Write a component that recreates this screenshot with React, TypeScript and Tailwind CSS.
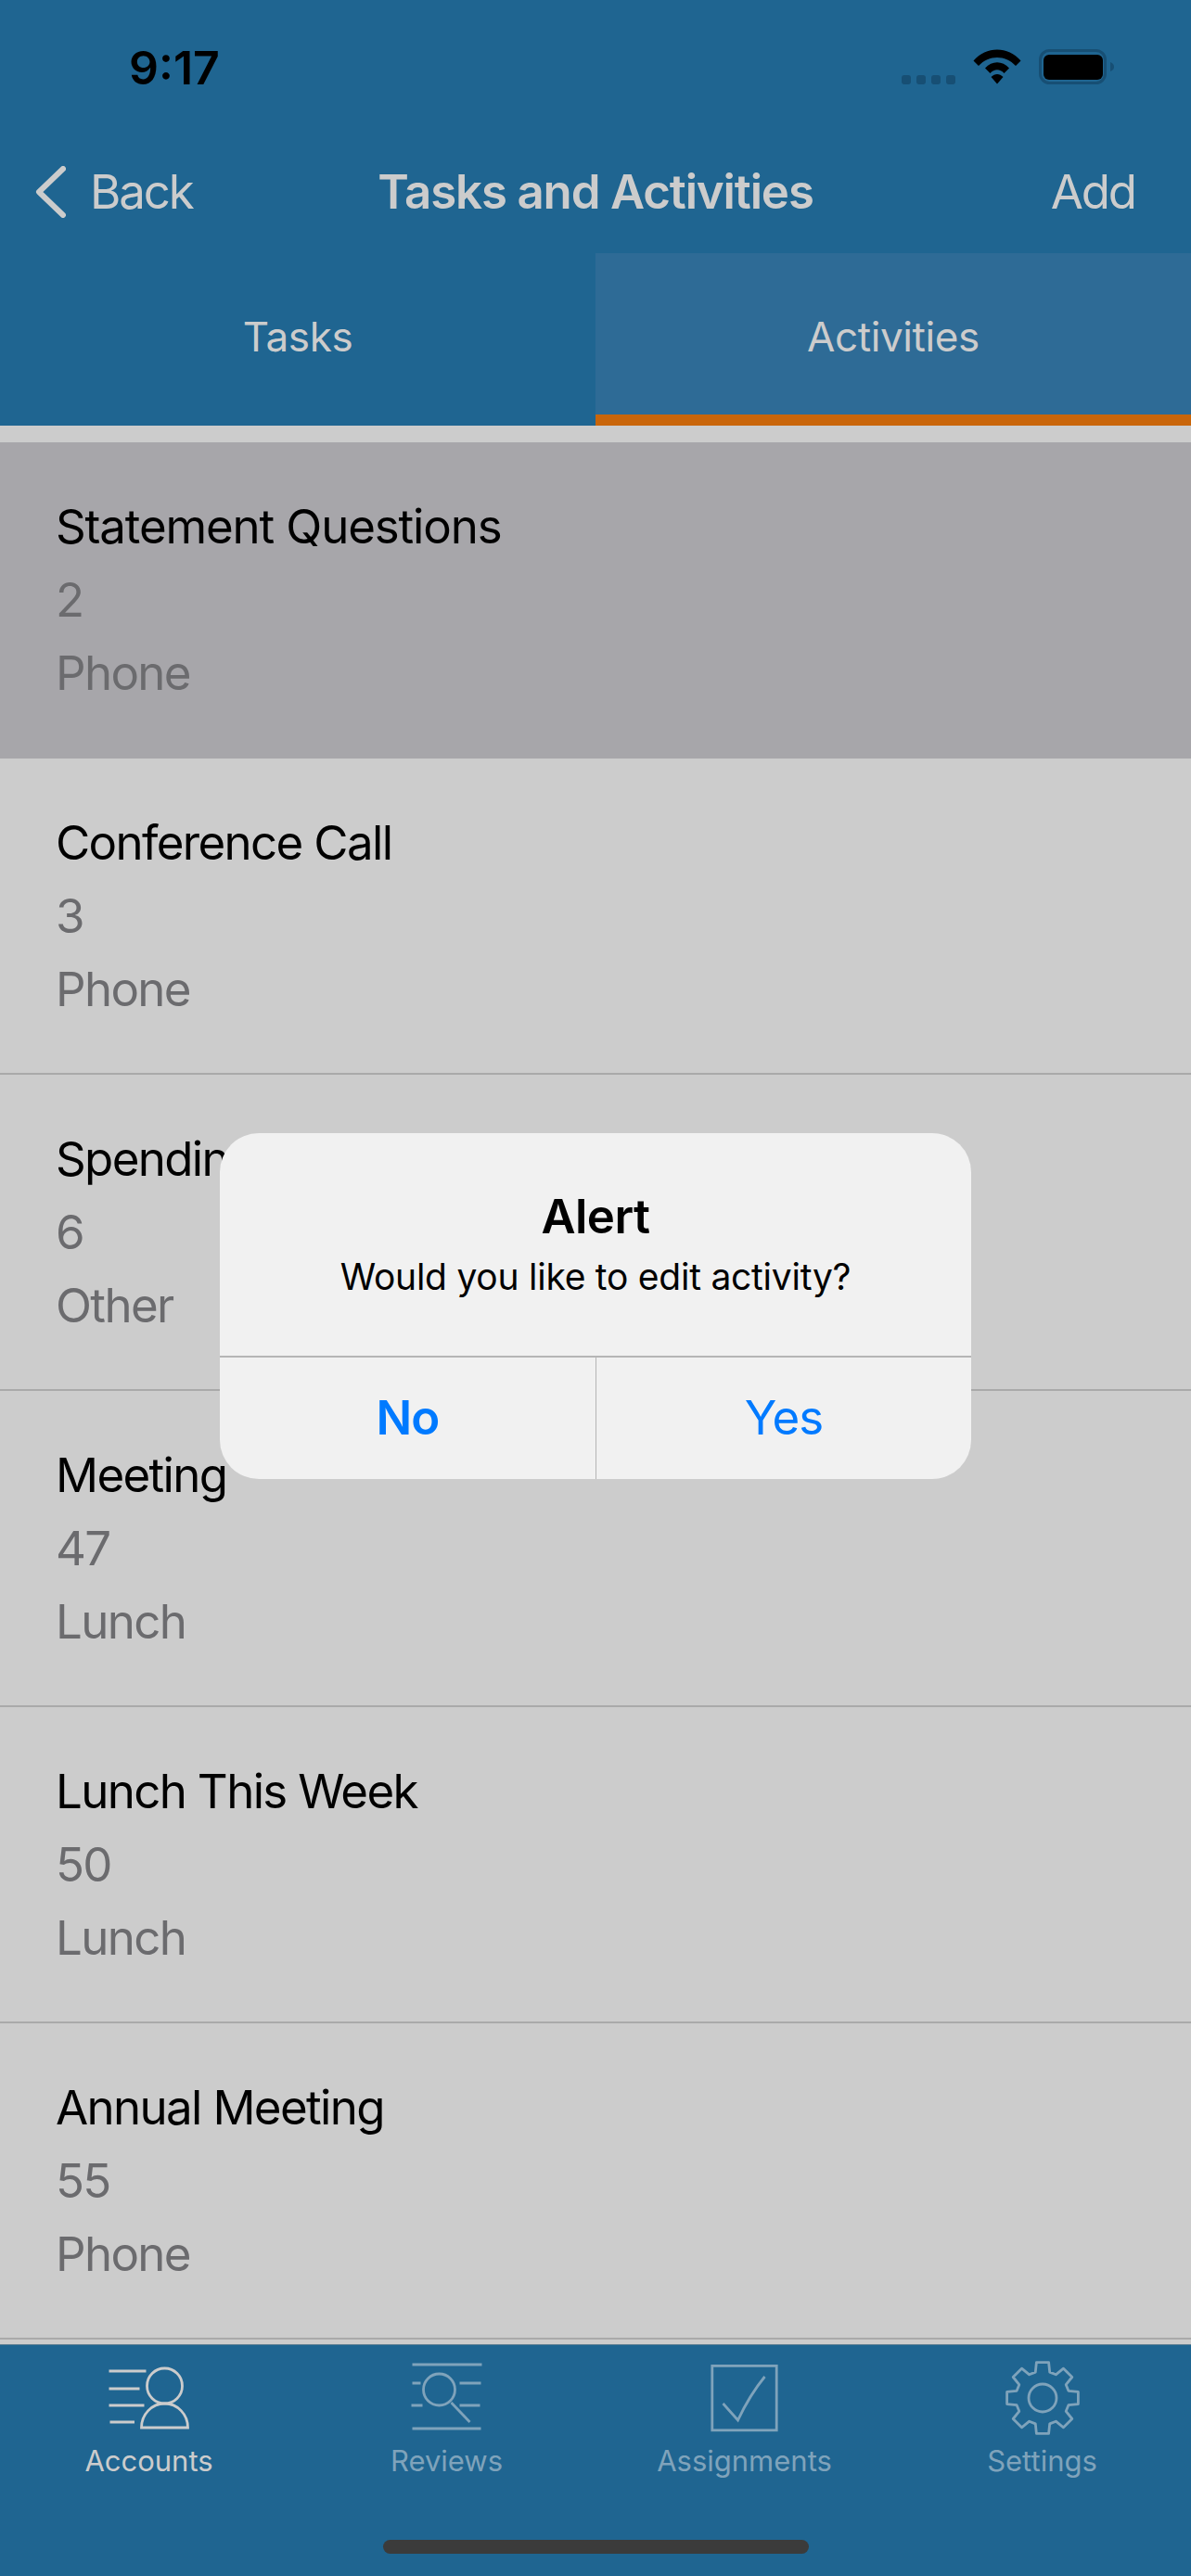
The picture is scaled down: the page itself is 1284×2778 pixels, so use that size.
const activities = [
  { title: 'Statement Questions', count: '2', kind: 'Phone' },
  { title: 'Conference Call', count: '3', kind: 'Phone' },
  { title: 'Spending Review', count: '6', kind: 'Other' },
  { title: 'Meeting', count: '47', kind: 'Lunch' },
  { title: 'Lunch This Week', count: '50', kind: 'Lunch' },
  { title: 'Annual Meeting', count: '55', kind: 'Phone' },
];

const gearPath = () => {
  const cx = 50;
  const cy = 46;
  const pts: string[] = [];
  for (let i = 0; i < 8; i++) {
    const a = (i * Math.PI) / 4 - Math.PI / 2;
    const at = (r: number, d: number) => {
      const t = a + d;
      return `${(cx + r * Math.cos(t)).toFixed(1)} ${(cy + r * Math.sin(t)).toFixed(1)}`;
    };
    pts.push(at(29, -0.27), at(39, -0.17), at(39, 0.17), at(29, 0.27));
  }
  return `M${pts.join(' L')} Z`;
};

const AccountsIcon = () => (
  <svg viewBox="0 0 100 90" className="h-[90px] w-[100px]" fill="none" stroke="#cccccc" strokeWidth="2.8">
    <path d="M6.5 17H46.5M6.5 36H39.5M6.5 54H44.5M7.5 72H34" />
    <circle cx="66.5" cy="33" r="19" />
    <path d="M41.5 78a25 26 0 0 1 50 0z" />
  </svg>
);

const ReviewsIcon = () => (
  <svg viewBox="0 0 100 90" className="h-[90px] w-[100px]" fill="none" stroke="#7fa3bb" strokeWidth="2.8">
    <path d="M12.5 10H87.5M12.5 79H86.5M12.5 30H21.5M63.5 30H86.5M11.5 54H23.5M63.5 54H85.5" />
    <circle cx="41.5" cy="37" r="17" />
    <path d="M54.5 51L74.5 72" />
  </svg>
);

const AssignmentsIcon = () => (
  <svg viewBox="0 0 100 90" className="h-[90px] w-[100px]" fill="none" stroke="#7fa3bb" strokeWidth="2.8">
    <rect x="14.8" y="11.4" width="69.4" height="69.4" />
    <path d="M26.5 52L42.5 70C50 54 60 37 71.5 23" />
  </svg>
);

const SettingsIcon = () => (
  <svg viewBox="0 0 100 90" className="h-[90px] w-[100px]" fill="none" stroke="#7fa3bb" strokeWidth="2.8" strokeLinejoin="round">
    <path d={gearPath()} />
    <circle cx="50" cy="46" r="15" />
  </svg>
);

const tabs = [
  { label: 'Accounts', icon: <AccountsIcon />, active: true },
  { label: 'Reviews', icon: <ReviewsIcon />, active: false },
  { label: 'Assignments', icon: <AssignmentsIcon />, active: false },
  { label: 'Settings', icon: <SettingsIcon />, active: false },
];

export default function App() {
  return (
    <div className="relative flex h-[2778px] w-[1284px] flex-col overflow-hidden bg-[#cccccc] font-['Inter',sans-serif] text-black">
      <header className="bg-[#1f6591] text-[#cccccc]">
        <div className="flex h-[141px] items-start justify-between pl-[139px] pr-[82px] pt-[43px]">
          <span className="text-[50px] font-semibold leading-[60px] text-black">9:17</span>
          <div className="mt-[10px] flex items-start">
            <div className="mt-[28px] flex gap-[6px]">
              <span className="h-[10px] w-[10px] rounded-[3px] bg-[#174f74]" />
              <span className="h-[10px] w-[10px] rounded-[3px] bg-[#174f74]" />
              <span className="h-[10px] w-[10px] rounded-[3px] bg-[#174f74]" />
              <span className="h-[10px] w-[10px] rounded-[3px] bg-[#174f74]" />
            </div>
            <svg viewBox="0 0 52 38" className="ml-[19px] h-[38px] w-[52px]" fill="#000000">
              <path d="M0.5 12.5C14 -3.5 38 -3.5 51.5 12.5L46 18C35 6 17 6 6 18Z" />
              <path d="M13 24.5C20.5 16 31.5 16 39 24.5L33.5 30C29 25 23 25 18.5 30Z" transform="translate(0 -4)" />
              <path d="M19.5 30C23.5 26 28.5 26 32.5 30L26 37.5Z" />
            </svg>
            <svg viewBox="0 0 82 38" className="ml-[19px] h-[38px] w-[82px]">
              <rect x="1.5" y="1.5" width="70" height="35" rx="10" fill="none" stroke="#174f74" strokeWidth="3" />
              <rect x="5" y="6" width="64" height="27" rx="6" fill="#000000" />
              <path d="M77 14C80 15 81 17 81 19C81 21 80 23 77 24Z" fill="#174f74" />
            </svg>
          </div>
        </div>

        <div className="relative flex h-[132px] items-center justify-between pl-[38px] pr-[60px] text-[51px] tracking-[-2.1px]">
          <div className="flex items-center">
            <svg viewBox="0 0 33 56" className="h-[56px] w-[33px]" fill="none" stroke="#cccccc" strokeWidth="6" strokeLinecap="round" strokeLinejoin="round">
              <path d="M30 3L4 28L30 53" />
            </svg>
            <span className="ml-[26px]">Back</span>
          </div>
          <span className="absolute left-0 right-0 text-center font-semibold tracking-[-1.15px]">Tasks and Activities</span>
          <span>Add</span>
        </div>

        <div className="grid h-[186px] grid-cols-2 text-[44px] tracking-[-0.4px]">
          <div className="flex items-center justify-center pb-[6px]">Tasks</div>
          <div className="flex items-center justify-center border-b-[12px] border-[#c9650a] bg-[#2e6b96] pt-[6px]">Activities</div>
        </div>
      </header>

      <div className="mt-[18px] flex-1">
        {activities.map((a, i) => (
          <div
            key={a.title}
            className={`h-[341px] border-b-2 pl-[60px] pt-[51px] text-[51px] leading-[79px] tracking-[-1.65px] ${i === 0 ? 'border-[#a7a6aa] bg-[#a7a6aa]' : 'border-[#a9a9a9]'}`}
          >
            <div className={i === 0 ? 'tracking-[-1.15px]' : ''}>{a.title}</div>
            <div className="text-[#6b6b6e]">{a.count}</div>
            <div className="text-[#6b6b6e]">{a.kind}</div>
          </div>
        ))}
      </div>

      <nav className="relative h-[250px] border-t border-[#5f7f94] bg-[#1f6591] pt-[11px]">
        <div className="grid grid-cols-4">
          {tabs.map((t) => (
            <div key={t.label} className={`flex flex-col items-center ${t.active ? 'text-[#cccccc]' : 'text-[#7fa3bb]'}`}>
              {t.icon}
              <span className="text-[31px] leading-[48px]">{t.label}</span>
            </div>
          ))}
        </div>
        <div className="absolute bottom-[24px] left-[413px] h-[15px] w-[459px] rounded-full bg-[#3b3b3b]" />
      </nav>

      <div className="absolute left-[237px] top-[1222px] flex h-[373px] w-[810px] flex-col rounded-[42px] bg-[#f1f1f1]">
        <div className="flex h-[242px] flex-col items-center border-b-2 border-[#b5b5b5] pt-[60px]">
          <span className="text-[51px] font-semibold leading-[60px] tracking-[-0.6px]">Alert</span>
          <span className="mt-[10px] text-[39px] leading-[50px] tracking-[-0.25px]">Would you like to edit activity?</span>
        </div>
        <div className="grid flex-1 grid-cols-2 text-[51px] tracking-[-1px] text-[#007aff]">
          <div className="flex items-center justify-center font-semibold">No</div>
          <div className="flex items-center justify-center border-l border-[#b5b5b5]">Yes</div>
        </div>
      </div>
    </div>
  );
}
